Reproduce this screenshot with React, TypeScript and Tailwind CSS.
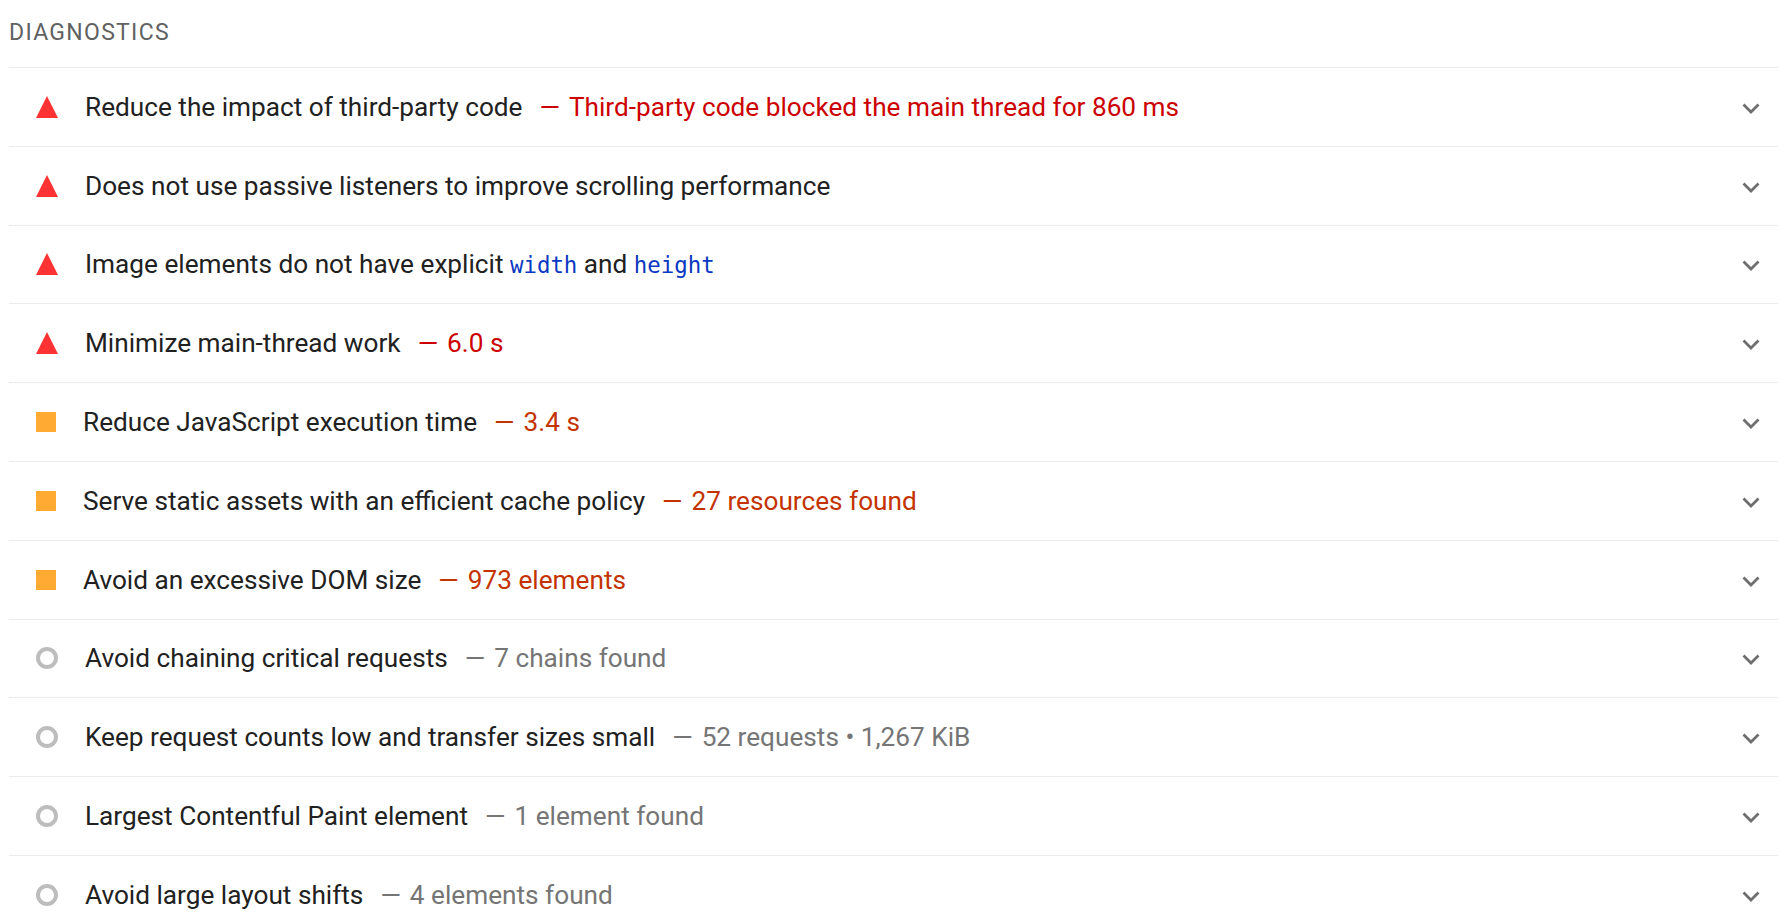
import type { ReactNode } from "react";

type Level = "fail" | "average" | "info";

interface Audit {
    level: Level;
    title: ReactNode;
    value?: string;
}

const audits: Audit[] = [
    { level: "fail", title: "Reduce the impact of third-party code", value: "Third-party code blocked the main thread for 860 ms" },
    { level: "fail", title: "Does not use passive listeners to improve scrolling performance" },
    {
        level: "fail",
        title: (
            <>
                Image elements do not have explicit <Code>width</Code> and <Code>height</Code>
            </>
        ),
    },
    { level: "fail", title: "Minimize main-thread work", value: "6.0 s" },
    { level: "average", title: "Reduce JavaScript execution time", value: "3.4 s" },
    { level: "average", title: "Serve static assets with an efficient cache policy", value: "27 resources found" },
    { level: "average", title: "Avoid an excessive DOM size", value: "973 elements" },
    { level: "info", title: "Avoid chaining critical requests", value: "7 chains found" },
    { level: "info", title: "Keep request counts low and transfer sizes small", value: "52 requests • 1,267 KiB" },
    { level: "info", title: "Largest Contentful Paint element", value: "1 element found" },
    { level: "info", title: "Avoid large layout shifts", value: "4 elements found" },
];

function Code({ children }: { children: ReactNode }) {
    return (
        <code className="font-['DejaVu_Sans_Mono',monospace] text-[22.4px] text-[#0938c2]">{children}</code>
    );
}

function ScoreIcon({ level }: { level: Level }) {
    if (level === "fail") {
        return (
            <svg width="22" height="22" viewBox="0 0 22 22" className="shrink-0">
                <polygon points="11,0 22,22 0,22" fill="#ff3333" />
            </svg>
        );
    }
    if (level === "average") {
        return <span className="block w-[20px] h-[20px] bg-[#ffaa33] shrink-0" />;
    }
    return <span className="block w-[22px] h-[22px] rounded-full border-[4px] border-[#bdbdbd] shrink-0" />;
}

function Chevron() {
    return (
        <svg width="18" height="11" viewBox="0 0 18 11" className="shrink-0 mt-[3px]">
            <path d="M1.5 1.5 L9 9 L16.5 1.5" fill="none" stroke="#6e6e6e" strokeWidth="2.8" />
        </svg>
    );
}

const valueColor: Record<Level, string> = {
    fail: "text-[#cc0000]",
    average: "text-[#c33300]",
    info: "text-[#757575]",
};

export default function App() {
    return (
        <main className="min-h-screen bg-white pl-[9px] pr-[7px] font-['Roboto',Arial,sans-serif] text-[#212121]">
            <div className="h-[67px] pt-[18px]">
                <h2 className="text-[23px] leading-[30px] tracking-[1.3px] text-[#616161]">DIAGNOSTICS</h2>
            </div>
            {audits.map((audit, i) => (
                <div
                    key={i}
                    className="flex items-center h-[78.8px] border-t border-[#ebebeb] pl-[27px] pr-[18px]"
                >
                    <div className="w-[22px] flex justify-start">
                        <ScoreIcon level={audit.level} />
                    </div>
                    <div className={`flex-1 flex items-baseline whitespace-nowrap text-[26.2px] leading-[36px] ${audit.level === "average" ? "ml-[25px]" : "ml-[27px]"}`}>
                        <span>{audit.title}</span>
                        {audit.value && (
                            <>
                                <span className={`ml-[17px] ${valueColor[audit.level]}`}>—</span>
                                <span className={`ml-[9px] ${valueColor[audit.level]}`}>{audit.value}</span>
                            </>
                        )}
                    </div>
                    <Chevron />
                </div>
            ))}
        </main>
    );
}
